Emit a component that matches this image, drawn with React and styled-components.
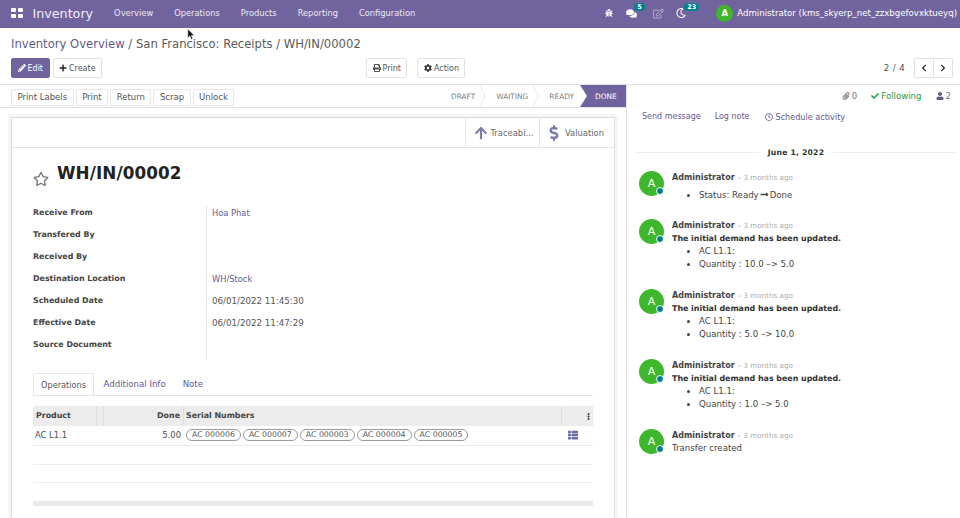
import React from "react";
import styled, { createGlobalStyle } from "styled-components";
import {
  FaBug,
  FaComments,
  FaRegEdit,
  FaRegMoon,
  FaPencilAlt,
  FaPlus,
  FaPrint,
  FaCog,
  FaChevronLeft,
  FaChevronRight,
  FaPaperclip,
  FaCheck,
  FaUser,
  FaRegClock,
  FaArrowUp,
  FaDollarSign,
  FaRegStar,
  FaThList,
  FaLongArrowAltRight,
  FaEllipsisV,
} from "react-icons/fa";

const GlobalStyle = createGlobalStyle`
  html, body { margin: 0; padding: 0; background: #fff; }
  body {
    font-family: "DejaVu Sans", "Open Sans", sans-serif;
    font-size: 9.5px;
    color: #4c4c4c;
    overflow: hidden;
  }
`;

const menus = ["Overview", "Operations", "Products", "Reporting", "Configuration"];
const fields = [
  ["Receive From", "Hoa Phat", true],
  ["Transfered By", ""],
  ["Received By", ""],
  ["Destination Location", "WH/Stock", true],
  ["Scheduled Date", "06/01/2022 11:45:30"],
  ["Effective Date", "06/01/2022 11:47:29"],
  ["Source Document", ""],
];
const serials = ["AC 000006", "AC 000007", "AC 000003", "AC 000004", "AC 000005"];
const demandChanges = ["Quantity : 10.0 –> 5.0", "Quantity : 5.0 –> 10.0", "Quantity : 1.0 –> 5.0"];

function App() {
  return (
    <Page>
      <GlobalStyle />
      <Navbar>
        <AppsIcon>
          <i /><i /><i /><i />
        </AppsIcon>
        <Brand>Inventory</Brand>
        <Menu>
          {menus.map((m) => (
            <MenuItem key={m}>{m}</MenuItem>
          ))}
        </Menu>
        <Systray>
          <TrayIcon><FaBug size={8} /></TrayIcon>
          <TrayIcon $gap={13}>
            <FaComments size={11} />
            <Badge>5</Badge>
          </TrayIcon>
          <TrayIcon $gap={16} $dim><FaRegEdit size={11} /></TrayIcon>
          <TrayIcon $gap={12}>
            <FaRegMoon size={10} />
            <Badge>23</Badge>
          </TrayIcon>
          <NavAvatar>A</NavAvatar>
          <UserName>Administrator (kms_skyerp_net_zzxbgefovxktueyq)</UserName>
        </Systray>
      </Navbar>

      <ControlPanel>
        <Breadcrumb>
          <CrumbLink>Inventory Overview</CrumbLink>
          <span> / San Francisco: Receipts / WH/IN/00002</span>
        </Breadcrumb>
        <Controls>
          <ButtonGroup>
            <PrimaryButton><FaPencilAlt size={8} />Edit</PrimaryButton>
            <Button><FaPlus size={8} color="#222" />Create</Button>
          </ButtonGroup>
          <CenterGroup>
            <Button><FaPrint size={8} />Print</Button>
            <Button><FaCog size={8} color="#333" />Action</Button>
          </CenterGroup>
          <Pager>
            <span>2 / 4</span>
            <PagerButtons>
              <PagerButton><FaChevronLeft size={8} /></PagerButton>
              <PagerButton><FaChevronRight size={8} /></PagerButton>
            </PagerButtons>
          </Pager>
        </Controls>
      </ControlPanel>

      <Content>
        <FormColumn>
          <StatusBar>
            <ActionButtons>
              {["Print Labels", "Print", "Return", "Scrap", "Unlock"].map((b) => (
                <SmallButton key={b}>{b}</SmallButton>
              ))}
            </ActionButtons>
            <Steps>
              <Step>DRAFT</Step>
              <Step>WAITING</Step>
              <Step>READY</Step>
              <StepDone>DONE</StepDone>
            </Steps>
          </StatusBar>

          <Sheet>
            <StatButtons>
              <TraceButton>
                <FaArrowUp size={14} color="#7c7bad" />
                Traceabi...
              </TraceButton>
              <StatButton>
                <FaDollarSign size={16} color="#7c7bad" />
                Valuation
              </StatButton>
            </StatButtons>

            <SheetBody>
              <TitleRow>
                <StarIcon><FaRegStar size={16} color="#777" /></StarIcon>
                <Title>WH/IN/00002</Title>
              </TitleRow>
              <FieldTable>
                {fields.map(([label, value, link]) => (
                  <React.Fragment key={label}>
                    <FieldLabel>{label}</FieldLabel>
                    <FieldValue $link={link}>{value}</FieldValue>
                  </React.Fragment>
                ))}
              </FieldTable>

              <Tabs>
                <ActiveTab>Operations</ActiveTab>
                <Tab>Additional Info</Tab>
                <Tab>Note</Tab>
              </Tabs>

              <Table>
                <HeadRow>
                  <ProductHead>Product</ProductHead>
                  <SpacerHead />
                  <DoneHead>Done</DoneHead>
                  <SerialHead>Serial Numbers</SerialHead>
                  <MoreHead><FaEllipsisV size={7} /></MoreHead>
                </HeadRow>
                <BodyRow>
                  <ProductCell>AC L1.1</ProductCell>
                  <DoneCell>5.00</DoneCell>
                  <SerialCell>
                    {serials.map((s) => (
                      <Tag key={s}>{s}</Tag>
                    ))}
                  </SerialCell>
                  <MoreCell><FaThList size={10} color="#6d68a8" /></MoreCell>
                </BodyRow>
                <EmptyRow />
                <EmptyRow />
                <TableFoot />
              </Table>
            </SheetBody>
          </Sheet>
        </FormColumn>

        <Chatter>
          <Topbar>
            <TopbarItem><FaPaperclip size={8} color="#8a8a8a" /> 0</TopbarItem>
            <Following><FaCheck size={8} /> Following</Following>
            <TopbarItem><FaUser size={8} color="#5f5a84" /> 2</TopbarItem>
          </Topbar>
          <ChatterActions>
            <ChatterLink>Send message</ChatterLink>
            <ChatterLink>Log note</ChatterLink>
            <ScheduleLink><FaRegClock size={8} /> Schedule activity</ScheduleLink>
          </ChatterActions>
          <DateLine><span>June 1, 2022</span></DateLine>

          <Message $compact>
            <Avatar>A<Online /></Avatar>
            <MessageBody>
              <Author>Administrator <When>– 3 months ago</When></Author>
              <Bullets $spaced>
                <li>Status: Ready<FaLongArrowAltRight size={9} />Done</li>
              </Bullets>
            </MessageBody>
          </Message>

          {demandChanges.map((quantity) => (
            <Message key={quantity}>
              <Avatar>A<Online /></Avatar>
              <MessageBody>
                <Author>Administrator <When>– 3 months ago</When></Author>
                <Strong>The initial demand has been updated.</Strong>
                <Bullets>
                  <li>AC L1.1:</li>
                  <li>{quantity}</li>
                </Bullets>
              </MessageBody>
            </Message>
          ))}

          <Message>
            <Avatar>A<Online /></Avatar>
            <MessageBody>
              <Author>Administrator <When>– 3 months ago</When></Author>
              <div>Transfer created</div>
            </MessageBody>
          </Message>
        </Chatter>
      </Content>

      <Cursor viewBox="0 0 10 15" width="8" height="12">
        <path d="M1 0v11l2.6-2.4L5.4 13l1.8-.8-1.8-4.2H9z" fill="#111" stroke="#fff" strokeWidth=".6" />
      </Cursor>
    </Page>
  );
}

export default App;

const Page = styled.div`
  position: relative;
  width: 960px;
  height: 518px;
  overflow: hidden;
`;

const Navbar = styled.header`
  display: flex;
  align-items: center;
  height: 28px;
  padding: 0 3px 2px 11px;
  background: #71639e;
  color: #fff;
  box-sizing: border-box;
`;
const AppsIcon = styled.div`
  display: grid;
  grid-template-columns: 5px 5px;
  grid-auto-rows: 4px;
  gap: 1.5px;
  i { background: #fff; border-radius: 1px; }
`;
const Brand = styled.div`
  margin-left: 10px;
  font-size: 12.7px;
  color: #f1eff6;
`;
const Menu = styled.nav`
  display: flex;
  gap: 21px;
  margin-left: 21px;
`;
const MenuItem = styled.span`
  font-size: 8.3px;
  color: #eeeaf4;
`;
const Systray = styled.div`
  display: flex;
  align-items: center;
  margin-left: auto;
`;
const TrayIcon = styled.span`
  position: relative;
  display: flex;
  margin-left: ${(p) => p.$gap || 0}px;
  opacity: ${(p) => (p.$dim ? 0.45 : 1)};
`;
const Badge = styled.span`
  position: absolute;
  left: 8px;
  top: -5px;
  padding: 0 3px;
  border-radius: 5px;
  background: #00808a;
  font-size: 6.5px;
  line-height: 8px;
  font-weight: 700;
`;
const NavAvatar = styled.span`
  display: flex;
  align-items: center;
  justify-content: center;
  width: 17px;
  height: 17px;
  margin-left: 30px;
  border-radius: 50%;
  background: #3fb72c;
  font-size: 8.5px;
  font-weight: 700;
`;
const UserName = styled.span`
  margin-left: 4px;
  font-size: 8.6px;
  white-space: nowrap;
`;

const ControlPanel = styled.section`
  height: 57px;
  padding: 9px 7px 0 11px;
  border-bottom: 1px solid #e2e2e2;
  box-sizing: border-box;
`;
const Breadcrumb = styled.div`
  height: 14px;
  font-size: 11.6px;
  line-height: 14px;
  color: #5a5a5a;
`;
const CrumbLink = styled.span`
  color: #5f5a8c;
`;
const Controls = styled.div`
  display: flex;
  align-items: center;
  margin-top: 7px;
`;
const ButtonGroup = styled.div`
  display: flex;
  gap: 3px;
  width: 355px;
`;
const CenterGroup = styled.div`
  display: flex;
  gap: 10px;
`;
const Button = styled.button`
  display: flex;
  align-items: center;
  gap: 2px;
  height: 20px;
  padding: 0 5.5px;
  border: 1px solid #e2e2e2;
  border-radius: 2px;
  background: #fff;
  color: #555;
  font: inherit;
  font-size: 8px;
`;
const PrimaryButton = styled(Button)`
  border-color: #71639e;
  background: #71639e;
  color: #fff;
`;
const Pager = styled.div`
  display: flex;
  align-items: center;
  gap: 9px;
  margin-left: auto;
  font-size: 8.6px;
  letter-spacing: 0.4px;
`;
const PagerButtons = styled.div`
  display: flex;
  border: 1px solid #e2e2e2;
  border-radius: 2px;
`;
const PagerButton = styled.span`
  display: flex;
  align-items: center;
  justify-content: center;
  width: 18px;
  height: 18px;
  color: #222;
  & + & { border-left: 1px solid #e2e2e2; }
`;

const Content = styled.main`
  display: flex;
  height: 433px;
`;
const FormColumn = styled.div`
  width: 627px;
  flex: none;
  box-sizing: border-box;
  border-right: 1px solid #e2e2e2;
  background: #fff;
`;
const StatusBar = styled.div`
  display: flex;
  align-items: center;
  justify-content: space-between;
  height: 23px;
  box-sizing: border-box;
  padding-left: 11px;
  border-bottom: 1px solid #e2e2e2;
`;
const ActionButtons = styled.div`
  display: flex;
  gap: 2px;
  margin-top: 2px;
`;
const SmallButton = styled.button`
  height: 17px;
  padding: 0 5.5px;
  border: 1px solid #e6e6e6;
  border-radius: 2px;
  background: #fff;
  color: #555;
  font: inherit;
  font-size: 8.5px;
`;
const Steps = styled.div`
  display: flex;
  align-items: stretch;
  height: 22px;
  overflow: hidden;
`;
const Step = styled.span`
  position: relative;
  display: flex;
  align-items: center;
  padding: 1px 10px 0 11px;
  color: #808080;
  font-size: 7.4px;
  &:nth-child(3) { padding-right: 6px; }
  &:not(:nth-child(3))::after {
    content: "";
    position: absolute;
    right: -3px;
    top: 3px;
    width: 15px;
    height: 15px;
    border-top: 1px solid #e4e4e4;
    border-right: 1px solid #e4e4e4;
    transform: scaleX(0.5) rotate(45deg);
  }
`;
const StepDone = styled.span`
  display: flex;
  align-items: center;
  width: 46px;
  box-sizing: border-box;
  padding: 1px 0 0 15px;
  background: #71639e;
  color: #fff;
  font-size: 7.4px;
  clip-path: polygon(0 0, 100% 0, 100% 100%, 0 100%, 7px 50%);
`;

const Sheet = styled.article`
  height: 410px;
  margin: 9px 11px 0 11px;
  border: 1px solid #dcdcdc;
  border-bottom: 0;
  box-shadow: -3px -3px 0 #f6f6f6, 3px -3px 0 #f6f6f6;
`;
const StatButtons = styled.div`
  display: flex;
  justify-content: flex-end;
  height: 29px;
  border-bottom: 1px solid #e4e4e4;
`;
const StatButton = styled.div`
  display: flex;
  align-items: center;
  gap: 2.5px;
  padding: 0 10px 0 6px;
  border-left: 1px solid #e4e4e4;
  color: #666;
  font-size: 8.4px;
`;
const TraceButton = styled(StatButton)`
  gap: 2px;
  padding: 0 6px 0 8px;
`;
const SheetBody = styled.div`
  padding: 0 21px;
`;
const TitleRow = styled.div`
  display: flex;
  align-items: flex-end;
  gap: 8px;
  height: 36px;
  margin-bottom: 22px;
`;
const StarIcon = styled.span`
  display: flex;
  margin-bottom: -3px;
`;
const Title = styled.h1`
  margin: 0;
  font-size: 16.8px;
  line-height: 22px;
  font-weight: 700;
  color: #222;
  letter-spacing: 0.1px;
`;
const FieldTable = styled.div`
  display: grid;
  grid-template-columns: 173px 1fr;
  grid-auto-rows: 22px;
`;
const FieldLabel = styled.div`
  font-size: 7.9px;
  font-weight: 700;
  color: #444;
  line-height: 14px;
`;
const FieldValue = styled.div`
  padding-left: 5px;
  border-left: 1px solid #e6e6e6;
  color: ${(p) => (p.$link ? "#5f5a8c" : "#555")};
  font-size: ${(p) => (p.$link ? 8.3 : 8.7)}px;
  line-height: 14px;
`;
const Tabs = styled.div`
  display: flex;
  height: 22px;
  margin-top: 13px;
  border-bottom: 1px solid #e6e6e6;
`;
const Tab = styled.span`
  display: flex;
  align-items: center;
  padding: 0 8.5px;
  color: #5f5a8c;
  font-size: 8.6px;
`;
const ActiveTab = styled(Tab)`
  height: 22px;
  padding: 0 7px;
  border: 1px solid #e6e6e6;
  border-bottom-color: #fff;
  color: #555;
  font-size: 8.2px;
  margin-right: 1px;
`;
const Table = styled.div`
  margin-top: 10px;
`;
const HeadRow = styled.div`
  display: flex;
  align-items: center;
  height: 20px;
  background: #ececec;
  color: #444;
  font-size: 7.9px;
  font-weight: 700;
`;
const ProductHead = styled.span`
  width: 64px;
  padding-left: 3px;
  box-sizing: border-box;
  line-height: 20px;
  border-right: 1px solid #dedede;
`;
const SpacerHead = styled.span`
  width: 7px;
  height: 20px;
  box-sizing: border-box;
  border-right: 1px solid #dedede;
`;
const DoneHead = styled.span`
  width: 80px;
  line-height: 20px;
  box-sizing: border-box;
  padding-right: 3px;
  text-align: right;
  border-right: 1px solid #dedede;
`;
const SerialHead = styled.span`
  width: 378px;
  padding-left: 2px;
  box-sizing: border-box;
  line-height: 20px;
  border-right: 1px solid #dedede;
`;
const MoreHead = styled.span`
  display: flex;
  flex: 1;
  justify-content: flex-end;
  padding-right: 1px;
`;
const BodyRow = styled.div`
  display: flex;
  align-items: center;
  height: 17px;
  padding-bottom: 2px;
  border-bottom: 1px solid #eaeaea;
  font-size: 8.4px;
`;
const ProductCell = styled.span`
  width: 71px;
  padding-left: 2px;
  box-sizing: border-box;
`;
const DoneCell = styled.span`
  width: 80px;
  box-sizing: border-box;
  padding-right: 3px;
  text-align: right;
`;
const SerialCell = styled.span`
  display: flex;
  gap: 2px;
  width: 378px;
  padding-left: 2px;
  box-sizing: border-box;
`;
const Tag = styled.span`
  padding: 0 5px;
  border: 1px solid #9a9a9a;
  border-radius: 7px;
  font-size: 7.8px;
  line-height: 10px;
  color: #555;
`;
const MoreCell = styled.span`
  display: flex;
  margin-left: 6px;
`;
const EmptyRow = styled.div`
  height: 17.5px;
  border-bottom: 1px solid #eeeeee;
`;
const TableFoot = styled.div`
  height: 5px;
  margin-top: 18px;
  background: #e9e9e9;
`;

const Chatter = styled.aside`
  flex: 1;
  min-width: 0;
  padding: 0 4px 0 9px;
`;
const Topbar = styled.div`
  display: flex;
  justify-content: flex-end;
  align-items: center;
  gap: 14px;
  height: 21px;
  padding-right: 5px;
  font-size: 8.6px;
`;
const TopbarItem = styled.span`
  display: flex;
  align-items: center;
  gap: 2px;
  color: #777;
`;
const Following = styled.span`
  display: flex;
  align-items: center;
  gap: 2px;
  color: #1f9a45;
`;
const ChatterActions = styled.div`
  display: flex;
  gap: 14px;
  margin: 2px 0 0 6px;
  height: 17px;
  align-items: center;
`;
const ChatterLink = styled.span`
  display: flex;
  align-items: center;
  gap: 2px;
  color: #5f5a8c;
  font-size: 8px;
`;
const ScheduleLink = styled(ChatterLink)`
  gap: 3px;
  margin-left: 1px;
  font-size: 8.1px;
`;
const DateLine = styled.div`
  display: flex;
  align-items: center;
  gap: 9px;
  margin: 21px 0 8px;
  height: 12px;
  color: #333;
  font-size: 7.7px;
  font-weight: 700;
  letter-spacing: 0.2px;
  &::before, &::after {
    content: "";
    flex: 1;
    border-top: 1px solid #eeeeee;
  }
`;
const Message = styled.div`
  display: flex;
  gap: 8px;
  height: ${(p) => (p.$compact ? 48 : 70)}px;
  padding-left: 3px;
  font-size: 8.6px;
  line-height: 13px;
`;
const Avatar = styled.div`
  position: relative;
  display: flex;
  flex: none;
  align-items: center;
  justify-content: center;
  width: 25px;
  height: 25px;
  margin-top: 5px;
  border-radius: 50%;
  background: #3fb72c;
  color: #fff;
  font-size: 11px;
`;
const Online = styled.span`
  position: absolute;
  right: 0;
  bottom: 1px;
  width: 6px;
  height: 6px;
  border: 1px solid #fff;
  border-radius: 50%;
  background: #00808a;
`;
const MessageBody = styled.div`
  padding-top: 5px;
  color: #444;
`;
const Author = styled.div`
  font-size: 8px;
  font-weight: 700;
  color: #444;
`;
const When = styled.span`
  font-weight: 400;
  font-size: 7.2px;
  color: #aaaaaa;
`;
const Strong = styled.div`
  font-size: 7.9px;
  font-weight: 700;
  color: #333;
`;
const Bullets = styled.ul`
  margin: ${(p) => (p.$spaced ? "5px" : "0")} 0 0;
  padding-left: 27px;
  svg { vertical-align: -1px; margin: 0 1px; }
`;
const Cursor = styled.svg`
  position: absolute;
  left: 187px;
  top: 29px;
`;
